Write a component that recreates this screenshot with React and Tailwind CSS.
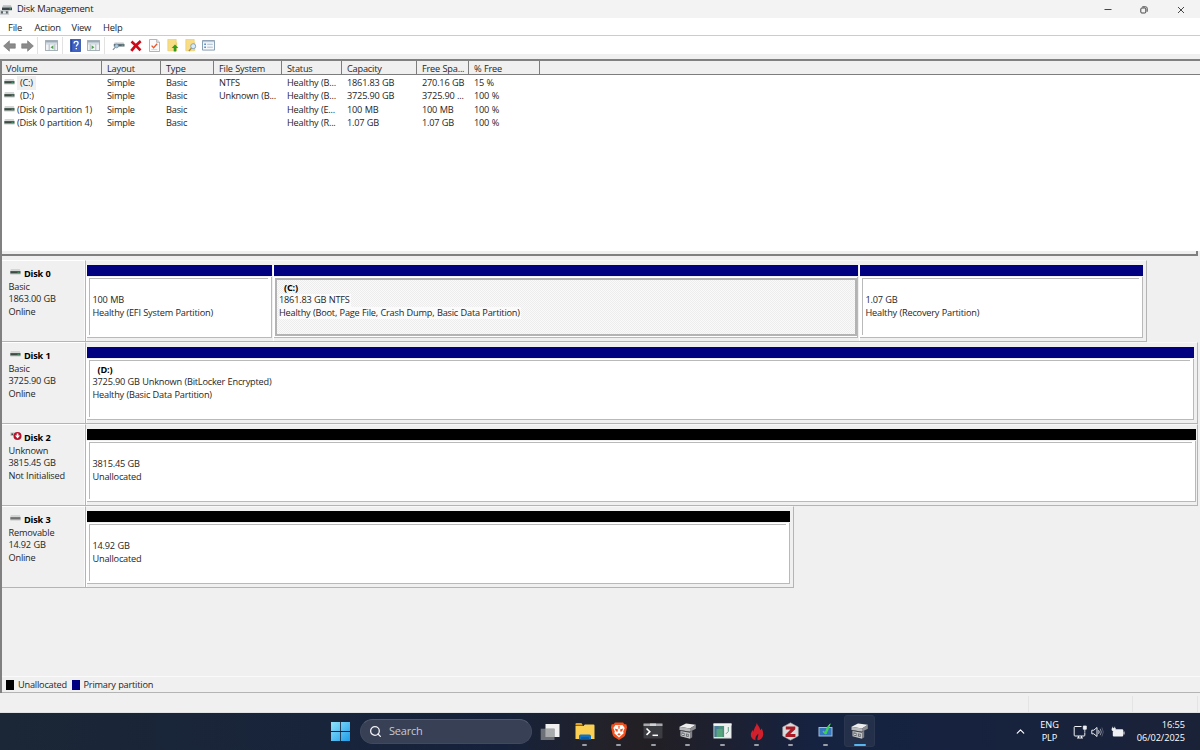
import React from "react";
import { ChevronUp, Search } from "lucide-react";

const COLUMNS = [
  { key: "name", label: "Volume", width: "w-[100px]", pad: "pl-[4px]" },
  { key: "layout", label: "Layout", width: "w-[59px]", pad: "pl-[5px]" },
  { key: "type", label: "Type", width: "w-[53px]", pad: "pl-[5px]" },
  { key: "fs", label: "File System", width: "w-[68px]", pad: "pl-[5px]" },
  { key: "status", label: "Status", width: "w-[60px]", pad: "pl-[5px]" },
  { key: "capacity", label: "Capacity", width: "w-[75px]", pad: "pl-[5px]" },
  { key: "free", label: "Free Spa...", width: "w-[52px]", pad: "pl-[5px]" },
  { key: "percent", label: "% Free", width: "w-[71px]", pad: "pl-[5px]" },
];

const VOLUMES = [
  { name: "(C:)", letter: true, selected: true, layout: "Simple", type: "Basic", fs: "NTFS", status: "Healthy (B...", capacity: "1861.83 GB", free: "270.16 GB", percent: "15 %" },
  { name: "(D:)", letter: true, layout: "Simple", type: "Basic", fs: "Unknown (B...", status: "Healthy (B...", capacity: "3725.90 GB", free: "3725.90 ...", percent: "100 %" },
  { name: "(Disk 0 partition 1)", layout: "Simple", type: "Basic", fs: "", status: "Healthy (E...", capacity: "100 MB", free: "100 MB", percent: "100 %" },
  { name: "(Disk 0 partition 4)", layout: "Simple", type: "Basic", fs: "", status: "Healthy (R...", capacity: "1.07 GB", free: "1.07 GB", percent: "100 %" },
];

const DISKS = [
  {
    name: "Disk 0",
    icon: "drive",
    kind: "Basic",
    size: "1863.00 GB",
    state: "Online",
    width: "w-[1061px]",
    partitions: [
      { size: "100 MB", status: "Healthy (EFI System Partition)", width: "w-[185px]" },
      { name: "(C:)", size: "1861.83 GB NTFS", status: "Healthy (Boot, Page File, Crash Dump, Basic Data Partition)", width: "w-[584px]", selected: true },
      { size: "1.07 GB", status: "Healthy (Recovery Partition)", width: "w-[283px]" },
    ],
  },
  {
    name: "Disk 1",
    icon: "drive",
    kind: "Basic",
    size: "3725.90 GB",
    state: "Online",
    width: "w-[1112px]",
    partitions: [
      { name: "(D:)", size: "3725.90 GB Unknown (BitLocker Encrypted)", status: "Healthy (Basic Data Partition)", width: "w-[1107px]" },
    ],
  },
  {
    name: "Disk 2",
    icon: "error",
    kind: "Unknown",
    size: "3815.45 GB",
    state: "Not Initialised",
    width: "w-[1112px]",
    partitions: [{ size: "3815.45 GB", status: "Unallocated", width: "w-[1109px]", free: true }],
  },
  {
    name: "Disk 3",
    icon: "removable",
    kind: "Removable",
    size: "14.92 GB",
    state: "Online",
    width: "w-[708px]",
    partitions: [{ size: "14.92 GB", status: "Unallocated", width: "w-[703px]", free: true }],
  },
];

function DriveIcon({ type = "drive" }) {
  if (type === "error") {
    return (
      <svg className="w-[12px] h-[10px]" viewBox="0 0 12 10">
        <path d="M.5 1.500h4v3.500h-4z" fill="#b9c1be" />
        <path d="M1.500 2.500H3V4H1.500z" fill="#3b4a44" />
        <circle cx="7.500" cy="5" r="4" fill="#b5122c" />
        <path d="M6.700 2.400h1.700v2h1.700L7.550 7.500 5 4.400h1.700z" fill="#fff" />
      </svg>
    );
  }
  return (
    <svg className="w-[11px] h-[6px]" viewBox="0 0 11 6">
      <path d="M.8 0h9l.7 2.200H.3z" fill="#d3d6d5" />
      <path d="M.3 2.100h10.200v2.600H.3z" fill={type === "removable" ? "#717171" : "#3c4c44"} />
      <path d="M.3 4.700h10.200v.8H.3z" fill="#c3c8c6" />
      {type === "drive" && <path d="M7.500 2.800h2v1h-2z" fill="#3f9a66" />}
    </svg>
  );
}

function AppIcon() {
  return (
    <svg className="w-[12px] h-[12px]" viewBox="0 0 12 12">
      <path d="M3 1.200h8L12 4H2z" fill="#b9bec1" />
      <path d="M2 3.600h10v2.600H2z" fill="#3c4648" />
      <path d="M9.500 4.400h1.500v.9H9.500z" fill="#5ec08a" />
      <path d="M0 6h9v4.800H0z" fill="#c7cbce" />
      <path d="M1 7.200h2v2.400H1zM5.800 7.200h2v2.400h-2z" fill="#596267" />
      <path d="M3 8h2.800v.9H3z" fill="#eef0f1" />
    </svg>
  );
}

function Arrow({ flip }) {
  return (
    <svg className={flip ? "w-[13px] h-[12px] -scale-x-100" : "w-[13px] h-[12px]"} viewBox="0 0 13 12">
      <path d="M.6 6 6.400.8v3h5.900v4.400H6.400v3z" fill="#8b8b8b" stroke="#747474" strokeWidth=".6" />
    </svg>
  );
}

function PaneIcon({ flip }) {
  return (
    <svg className={flip ? "w-[13px] h-[11px] -scale-x-100" : "w-[13px] h-[11px]"} viewBox="0 0 13 11">
      <path d="M.4.4h12.200v10.200H.4z" fill="#f1f3f4" stroke="#8795a1" strokeWidth=".8" />
      <path d="M.8.8h11.400v1.800H.8z" fill="#9dabb8" />
      <path d="M1 3.400h11v1H1z" fill="#c3ccd4" />
      <path d="M4.200 4.400v6M9.800 4.400v6" stroke="#97a5b0" strokeWidth=".7" />
      <path d="M8.400 5.300v4L5.600 7.300z" fill="#4d9e50" />
    </svg>
  );
}

function HelpIcon() {
  return (
    <svg className="w-[11px] h-[13px]" viewBox="0 0 11 13">
      <path d="M.4.4h10.200v12.200H.4z" fill="#3f63c6" stroke="#2a479d" strokeWidth=".8" />
      <path d="M.8.8h1.400v11.400H.8z" fill="#2b4799" />
      <path d="M4.100 4.400c0-1.500.9-2 2-2s2 .6 2 1.800c0 1.500-1.800 1.600-1.800 3.400" fill="none" stroke="#fff" strokeWidth="1.300" />
      <path d="M5.600 8.900H7v1.400H5.600z" fill="#fff" />
    </svg>
  );
}

function ConnectIcon() {
  return (
    <svg className="w-[13px] h-[10px]" viewBox="0 0 13 10">
      <path d="M2.600 1.400h8.900l1 1.900H1.800z" fill="#c2c8cc" />
      <path d="M1.800 3.100h10.700v2.400H1.800z" fill="#53636b" />
      <path d="M9.600 3.800h1.800v.9H9.600z" fill="#57b987" />
      <circle cx="4.600" cy="5" r="1.900" fill="#a9c9dd" stroke="#6a8798" strokeWidth=".6" />
      <path d="M3.200 6.400.9 8.800" stroke="#7a8a94" strokeWidth="1.100" />
    </svg>
  );
}

function DeleteIcon() {
  return (
    <svg className="w-[12px] h-[12px]" viewBox="0 0 12 12">
      <path d="M1.500 1.500c2.600 2.300 6 5.600 9 8.900M10.700 1.100C7 4 3.800 7.400 1.300 10.900" stroke="#cf0a18" strokeWidth="2.700" fill="none" />
    </svg>
  );
}

function CheckDocIcon() {
  return (
    <svg className="w-[11px] h-[13px]" viewBox="0 0 11 13">
      <path d="M.5.5h7.300l2.700 2.600v9.400H.5z" fill="#fbfbfb" stroke="#a2a2a2" strokeWidth=".8" />
      <path d="M7.600.5v2.800h2.900" fill="#e2e2e2" stroke="#a2a2a2" strokeWidth=".7" />
      <path d="M2.600 6.600 4.600 8.800 8.200 4.800" stroke="#e2592f" strokeWidth="1.300" fill="none" />
      <path d="M2.300 10.600h6" stroke="#c9c9c9" strokeWidth=".7" />
    </svg>
  );
}

function FolderIcon({ search }) {
  return (
    <svg className="w-[12px] h-[13px]" viewBox="0 0 12 13">
      <path d="M.8.4h8.400v11.400H.8z" fill="#f8dd85" stroke="#e8c765" strokeWidth=".6" />
      <path d="M9.200 3.500h1v8.300h-1z" fill="#eecb68" />
      {search ? (
        <>
          <circle cx="8.200" cy="7.200" r="2.500" fill="#d9ebf6" stroke="#7f9fb8" strokeWidth=".9" />
          <path d="M6.400 9.200 3.900 12" stroke="#a98944" strokeWidth="1.200" />
        </>
      ) : (
        <path d="M8 5.400 11.300 9H9.300v3.400H6.700V9h-2z" fill="#2f9e1e" />
      )}
    </svg>
  );
}

function ListIcon() {
  return (
    <svg className="w-[13px] h-[11px]" viewBox="0 0 13 11">
      <path d="M.5.5h12v9.600H.5z" fill="#f5f8fb" stroke="#7f95ac" strokeWidth=".9" />
      <path d="M.9.9h11.200v1.300H.9z" fill="#b7c8da" />
      <path d="M2.200 3.600H4v1.500H2.200zM2.200 6.500H4V8H2.200z" fill="#5c8fd0" />
      <path d="M5.200 4.300h5.600M5.200 7.200h5.600" stroke="#9aaec3" strokeWidth=".8" />
    </svg>
  );
}

function ToolButton({ children }) {
  return <button className="flex w-[18.2px] h-[18px] items-center justify-center">{children}</button>;
}

function ToolSeparator() {
  return <div className="mr-[4px] ml-px h-[17px] w-px bg-[#e2e2e2]" />;
}

function TitleBar() {
  return (
    <div className="flex h-[18px] items-center bg-[#f3f3f3] pt-px">
      <AppIcon />
      <span className="ml-[5px] text-[9.4px] tracking-[-0.2px] text-[#1b1b1b]">Disk Management</span>
      <div className="ml-auto flex items-center">
        <button className="flex w-[36px] justify-center" aria-label="Minimise">
          <svg className="w-[8px] h-[8px]" viewBox="0 0 8 8">
            <path d="M.5 3.500h7" stroke="#333" strokeWidth=".9" />
          </svg>
        </button>
        <button className="flex w-[36px] justify-center" aria-label="Restore">
          <svg className="w-[8px] h-[8px]" viewBox="0 0 8 8" fill="none" stroke="#333" strokeWidth=".9">
            <rect x=".8" y="2" width="5" height="5" rx="1" />
            <path d="M2.300.8h3.200c1.100 0 1.700.6 1.700 1.700v3.200" />
          </svg>
        </button>
        <button className="flex w-[38px] justify-center" aria-label="Close">
          <svg className="w-[8px] h-[8px]" viewBox="0 0 8 8">
            <path d="m1 1 6 6M7 1 1 7" stroke="#333" strokeWidth=".9" />
          </svg>
        </button>
      </div>
    </div>
  );
}

function MenuBar() {
  return (
    <div className="flex h-[18px] items-center border-b border-[#cccccc] bg-white pt-[3px] pl-[8px] text-[9.4px] tracking-[-0.2px]">
      <span className="w-[26.5px]">File</span>
      <span className="w-[37px]">Action</span>
      <span className="w-[31.5px]">View</span>
      <span>Help</span>
    </div>
  );
}

function Toolbar() {
  return (
    <div className="flex h-[18px] items-center bg-white pt-px">
      <ToolButton><Arrow /></ToolButton>
      <ToolButton><Arrow flip /></ToolButton>
      <ToolSeparator />
      <ToolButton><PaneIcon /></ToolButton>
      <ToolSeparator />
      <ToolButton><HelpIcon /></ToolButton>
      <ToolButton><PaneIcon flip /></ToolButton>
      <ToolSeparator />
      <ToolButton><ConnectIcon /></ToolButton>
      <ToolButton><DeleteIcon /></ToolButton>
      <ToolButton><CheckDocIcon /></ToolButton>
      <ToolButton><FolderIcon /></ToolButton>
      <ToolButton><FolderIcon search /></ToolButton>
      <ToolButton><ListIcon /></ToolButton>
    </div>
  );
}

function VolumeList() {
  return (
    <div className="flex h-[190px] flex-col bg-white">
      <div className="flex h-[14px] border-b border-[#7d7d7d] bg-[#f0f0f0]">
        {COLUMNS.map((col) => (
          <div key={col.key} className={`flex items-center border-r border-[#7d7d7d] pt-[3px] ${col.width} ${col.pad}`}>
            {col.label}
          </div>
        ))}
      </div>
      <div className="flex flex-col pt-[1.5px]">
        {VOLUMES.map((vol) => (
          <div key={vol.name} className="flex h-[13.25px] items-center whitespace-nowrap">
            {COLUMNS.map((col) =>
              col.key === "name" ? (
                <div key={col.key} className="flex w-[100px] items-center pl-[2px]">
                  <div className="pb-[2px]">
                    <DriveIcon />
                  </div>
                  <span className={vol.letter ? `ml-[2px] px-[3px] ${vol.selected ? "bg-[#f0f0f0]" : ""}` : "ml-[2px]"}>
                    {vol.name}
                  </span>
                </div>
              ) : (
                <div key={col.key} className={`${col.width} ${col.pad}`}>{vol[col.key]}</div>
              )
            )}
          </div>
        ))}
      </div>
    </div>
  );
}

function Partition({ part }) {
  return (
    <div className={`flex shrink-0 flex-col shadow-[-1px_0_0_#fff] ${part.width}`}>
      <div className={part.free ? "h-[11px] bg-black" : "h-[11px] bg-[#000080]"} />
      <div className="mt-px h-[61px] border-b border-r border-[#b9b9b9] bg-white">
        <div
          className={
            part.selected
              ? "mt-px ml-px h-[58px] border-2 border-[#b3b3b3] bg-[conic-gradient(#ededed_25%,#fafafa_0_50%,#ededed_0_75%,#fafafa_0)] bg-[size:2px_2px] pt-[2px] pl-[2px]"
              : "mt-px mr-[3px] ml-[2px] h-[57px] border-t border-l border-[#b9b9b9] pt-[3px] pl-[2.5px]"
          }
        >
          <div className="h-[12.5px] pl-[5px] font-bold leading-[12.5px] text-black">{part.name}</div>
          <div className="flex h-[12.5px]">
            <span className={part.selected ? "bg-[#fbfbfb] pr-px" : ""}>{part.size}</span>
          </div>
          <div className="flex h-[12.5px]">
            <span className={part.selected ? "bg-[#fbfbfb] pr-px" : ""}>{part.status}</span>
          </div>
        </div>
      </div>
    </div>
  );
}

function DiskRow({ disk }) {
  return (
    <div className="flex h-[82px] leading-[12.5px]">
      <div className="w-[84px] shrink-0 border-t border-r border-b border-t-white border-r-[#b4b4b4] border-b-[#b4b4b4] pt-[7.5px] pl-[6.5px] shadow-[inset_-1px_0_0_#fafafa]">
        <div className="flex h-[12.5px]">
          <div className="flex h-[8px] w-[15.5px] items-center pl-px">
            <DriveIcon type={disk.icon} />
          </div>
          <span className="font-bold text-black">{disk.name}</span>
        </div>
        <div>{disk.kind}</div>
        <div>{disk.size}</div>
        <div>{disk.state}</div>
      </div>
      <div className={`flex gap-[2px] border-t border-r border-b border-t-[#f8f8f8] border-[#b4b4b4] pt-[4px] pl-px ${disk.width}`}>
        {disk.partitions.map((part) => (
          <Partition key={part.size} part={part} />
        ))}
      </div>
    </div>
  );
}

function Legend() {
  return (
    <div className="flex h-[17px] items-center border-t border-b border-t-[#fafafa] border-b-[#b4b4b4] pt-px pl-[4px]">
      <div className="h-[10px] w-[8px] bg-black" />
      <span className="ml-[4px] w-[53.5px]">Unallocated</span>
      <div className="h-[10px] w-[8px] bg-[#000080]" />
      <span className="ml-[4px]">Primary partition</span>
    </div>
  );
}

function StartIcon() {
  return (
    <svg className="w-[19px] h-[19px]" viewBox="0 0 19 19">
      <defs>
        <linearGradient id="start" x1="0" y1="0" x2="1" y2="1">
          <stop offset="0" stopColor="#8fe3fb" />
          <stop offset="1" stopColor="#1e9cea" />
        </linearGradient>
      </defs>
      <path d="M0 0h9.100v9.100H0zM9.900 0H19v9.100H9.900zM0 9.900h9.100V19H0zM9.900 9.900H19V19H9.900z" fill="url(#start)" />
    </svg>
  );
}

function TaskViewIcon() {
  return (
    <svg className="w-[20px] h-[20px]" viewBox="0 0 20 20">
      <path d="M5.500 2h14v13h-14z" fill="#f1f1f1" />
      <path d="M.7 6.700h13.800V18H.7z" fill="#77797d" fillOpacity=".9" />
      <path d="M5.500 6.700h9V15h-9z" fill="#a9aaac" />
    </svg>
  );
}

function ExplorerIcon() {
  return (
    <svg className="w-[20px] h-[20px]" viewBox="0 0 20 20">
      <path d="M.5 3q0-1 1-1h5L8 4.500H.5z" fill="#e0a11c" />
      <path d="M.5 5h8l1.300-1.500h8.700q1 0 1 1V18H.5z" fill="#fcd052" />
      <path d="M4 18.500V15q0-1.500 1.500-1.500h9q1.500 0 1.500 1.500v3.500z" fill="#1272c5" />
      <path d="M6 18.500v-1.800q0-.7.7-.7h6.600q.7 0 .7.7v1.800z" fill="#0d5a9f" />
    </svg>
  );
}

function BraveIcon() {
  return (
    <svg className="w-[18px] h-[20px]" viewBox="0 0 18 20">
      <path d="M5 1.500h8l1.500 1.800h1.800l.7 3-1.600 7.200q-.4 1.500-1.700 2.500L9 19l-4.700-3q-1.300-1-1.700-2.500L1 6.300l.7-3h1.800z" fill="#f4501e" />
      <path d="M9 4.300 12.500 3.900 14.700 7l-1.500 3.600.5 1.700L9 16.500l-4.700-4.200.5-1.700L3.300 7l2.200-3.100z" fill="#fff" />
      <path d="M4.800 7.500 8 8.600 7.300 11 5.800 10zM13.200 7.500 10 8.600l.7 2.400 1.500-1zM7.200 13.200 9 12.300l1.800.9L9 14.600zM8.300 4.900h1.400l-.3 3h-.8z" fill="#f4501e" />
    </svg>
  );
}

function TerminalIcon() {
  return (
    <svg className="w-[20px] h-[18px]" viewBox="0 0 20 18">
      <rect x=".5" y="1.500" width="19" height="15" rx="1" fill="#3c3d42" />
      <path d="M.5 1.500h19V4H.5z" fill="#a7a9ac" />
      <path d="M7 1.500h6V4H7z" fill="#d1d2d4" />
      <path d="m3.500 6.500 3.300 3.200-3.300 3.200" stroke="#fff" strokeWidth="1.600" fill="none" />
      <path d="M9.500 13.300H15" stroke="#fff" strokeWidth="1.500" />
    </svg>
  );
}

function ServerIcon() {
  return (
    <svg className="w-[19px] h-[18px]" viewBox="0 0 19 18">
      <path d="M1.500 4.800 8 1.500 17.800 2.800 12 6.500z" fill="#ededed" />
      <path d="M1.500 4.800 12 6.500v3.300L1.500 8z" fill="#b9babc" />
      <path d="M12 6.500 17.800 2.800v4L12 9.800z" fill="#8b8d90" />
      <path d="M2.500 8.200 12 9.900v6.900L2.500 14.300z" fill="#c3c4c6" />
      <path d="m12 9.900 2.200-1.200v6.600L12 16.800z" fill="#7f8185" />
      <path d="m2 8 10 1.800v1L2 9z" fill="#3d4046" />
      <path d="m3.500 10.300 3 .6v3.400l-3-.7z" fill="#55585e" />
      <circle cx="5" cy="12.300" r=".9" fill="#e8e8e8" />
      <path d="m7.900 11.400 2.800.5V15l-2.800-.6z" fill="#62656b" />
      <path d="m8.800 12.500 1.100.2v1.100l-1.100-.2z" fill="#e8e8e8" />
    </svg>
  );
}

function WindowsPaneIcon() {
  return (
    <svg className="w-[19px] h-[16px]" viewBox="0 0 19 16">
      <path d="M.5.5h18v15H.5z" fill="#dfe5e4" />
      <path d="M.5.5h18v2H.5z" fill="#f3f5f5" />
      <path d="M1.500 3H11v11H1.500z" fill="#4c8f7c" />
      <path d="M1.500 3h4v11h-4z" fill="#4b7aa0" />
      <path d="M3.500 6h6v8h-6z" fill="#56a57d" />
      <path d="M12 3h5.500v11H12z" fill="#eef2f1" />
      <path d="M15.300 4v4.500L13 10.800" stroke="#5f9a84" strokeWidth="1" fill="none" />
    </svg>
  );
}

function FlameIcon() {
  return (
    <svg className="w-[14px] h-[19px]" viewBox="0 0 14 19">
      <path d="M6.800.8c.2 2.200 3.300 4.300 3.500 7.200.8-.4 1.100-1 1.200-1.800 1.200 2 1.900 4 1.700 6.600-.3 3-2.200 5.200-5.600 5.500-.8-2.300 1-4 .7-6.600-2 1.600-3.300 3.600-2.800 6.500C2.500 17.700.8 15.600.8 12.800c0-2 .9-3.600 2.200-4.900 0 .9.200 1.400.7 1.900C3.500 6.400 6.400 4.500 6.800.8z" fill="#cf202c" />
    </svg>
  );
}

function HexIcon() {
  return (
    <svg className="w-[17px] h-[19px]" viewBox="0 0 17 19">
      <path d="M8.500.8 16.300 5v9l-7.800 4.200L.7 14V5z" fill="#d9dadb" stroke="#98999b" strokeWidth=".6" />
      <path d="M3.800 4.500h9.500v2.700L8.200 12h5.200v3H3.500v-2.600l5-4.900H3.800z" fill="#a91b25" />
    </svg>
  );
}

function MonitorCheckIcon() {
  return (
    <svg className="w-[15px] h-[16px]" viewBox="0 0 15 16">
      <path d="M.5 4h14v9.500H.5z" fill="#9fc0dd" />
      <path d="M1.500 5h12v7.500h-12z" fill="#3578bd" />
      <path d="m5 8 2.300 1.600C8.300 6.500 9.300 3.500 12.200.8 10.900 3.800 10 7 8 11L5.800 9.800z" fill="#3fd555" stroke="#3fd555" />
    </svg>
  );
}

const TASKS = [
  { id: "explorer", Icon: ExplorerIcon },
  { id: "brave", Icon: BraveIcon },
  { id: "terminal", Icon: TerminalIcon },
  { id: "server", Icon: ServerIcon },
  { id: "panes", Icon: WindowsPaneIcon },
  { id: "flame", Icon: FlameIcon },
  { id: "hex", Icon: HexIcon },
  { id: "monitor", Icon: MonitorCheckIcon },
  { id: "diskmgmt", Icon: ServerIcon, active: true },
];

function SystemTray() {
  return (
    <div className="ml-auto flex items-center pr-[15px] text-[9.2px] leading-[12.5px] tracking-[-0.05px] text-white">
      <ChevronUp className="w-[13px] h-[13px]" strokeWidth={2.2} />
      <div className="ml-[13px] w-[20px] text-center">
        <div>ENG</div>
        <div>PLP</div>
      </div>
      <svg className="ml-[13px] w-[14px] h-[14px]" viewBox="0 0 14 14" fill="none" stroke="#eef0f4">
        <path d="M8.500 1.500H2q-.8 0-.8.8v7.900q0 .8.8.8h9q.8 0 .8-.8V7.500M4 13h6M5.500 11v2M8.500 11v2" />
        <path d="M10.300 1h3v3.200h-3zM11.800 4.200v3" fill="#eef0f4" strokeWidth=".8" />
      </svg>
      <svg className="ml-[4px] w-[13px] h-[12px]" viewBox="0 0 13 12" fill="none" stroke="#eef0f4">
        <path d="M.8 4.200h2L6 1.500v9L2.800 7.800h-2z" strokeLinejoin="round" />
        <path d="M7.600 4.300q1.100 1.700 0 3.400" />
        <path d="M9.200 2.800q2.200 3.200 0 6.400" stroke="#8d93a3" />
        <path d="M10.900 1.500q2.800 4.500 0 9" stroke="#50586b" />
      </svg>
      <svg className="ml-[7px] w-[14px] h-[12px]" viewBox="0 0 14 12">
        <path d="M4.500 3.300h6.700q1 0 1 1v5.200q0 1-1 1H2.800q-1 0-1-1V6.500z" fill="#eef0f4" />
        <path d="M12.500 5.500h1v3h-1z" fill="#eef0f4" />
        <path d="M1 2.500v1q0 1.700 1.700 1.700t1.700-1.700v-1zM1.700.8v2M3.700.8v2M2.700 5v3" stroke="#eef0f4" fill="#eef0f4" strokeWidth=".8" />
      </svg>
      <div className="w-[60.5px] text-right">
        <div>16:55</div>
        <div>06/02/2025</div>
      </div>
    </div>
  );
}

function Taskbar() {
  return (
    <div className="flex h-[37px] items-center bg-[linear-gradient(90deg,#1b2636_0%,#18243a_28%,#15213b_42%,#22222a_50%,#221f24_54%,#1d2030_60%,#152241_68%,#16223f_78%,#1a2238_100%)] pl-[331px]">
      <StartIcon />
      <div className="mr-px ml-[10px] flex h-[25px] w-[172px] items-center rounded-full border border-[#40495e] border-t-[#525b6e] bg-[#374055] pl-[8px]">
        <Search className="w-[13px] h-[13px] text-[#f1f2f5]" strokeWidth={2.4} />
        <span className="ml-[7px] text-[11px] tracking-[-0.2px] text-[#c5cad4]">Search</span>
      </div>
      <div className="flex w-[34.4px] justify-center">
        <TaskViewIcon />
      </div>
      {TASKS.map(({ id, Icon, active }) => (
        <div key={id} className="flex w-[34.4px] justify-center pb-px">
          <div
            className={
              active
                ? "flex h-[32px] w-[31px] flex-col items-center justify-between rounded-[3px] border border-[#2b3650] bg-[#243049]"
                : "flex h-[32px] w-[31px] flex-col items-center justify-between border border-transparent"
            }
          >
            <div className="flex h-[28px] items-center pt-[2px]">
              <Icon />
            </div>
            <div className={active ? "h-[2px] w-[12px] shrink-0 rounded-full bg-[#58b5ee]" : "h-[2px] w-[5px] shrink-0 rounded-full bg-[#9a9ea8]"} />
          </div>
        </div>
      ))}
      <SystemTray />
    </div>
  );
}

export default function App() {
  return (
    <div className="flex h-[750px] w-[1200px] flex-col overflow-hidden bg-[#f0f0f0] font-['Open_Sans','Noto_Sans',sans-serif] text-[9.2px] tracking-[-0.2px] text-[#262626] [word-spacing:0.3px]">
      <TitleBar />
      <MenuBar />
      <Toolbar />
      <div className="mt-[5px] flex h-[634px] flex-col border-l-2 border-t-2 border-[#808080]">
        <VolumeList />
        <div className="mr-[2px] h-[5px] border-r-2 border-b-2 border-[#808080]" />
        <div className="flex h-[420px] flex-col pt-[3.5px]">
          {DISKS.map((disk) => (
            <DiskRow key={disk.name} disk={disk} />
          ))}
        </div>
        <Legend />
      </div>
      <div className="flex flex-1 justify-end border-b border-[#dfe3e6] pt-[3px]">
        <div className="w-[104px] border-l border-[#e4e4e4]" />
        <div className="w-[66px] border-x border-[#e4e4e4]" />
        <div className="w-[2px]" />
      </div>
      <Taskbar />
    </div>
  );
}
